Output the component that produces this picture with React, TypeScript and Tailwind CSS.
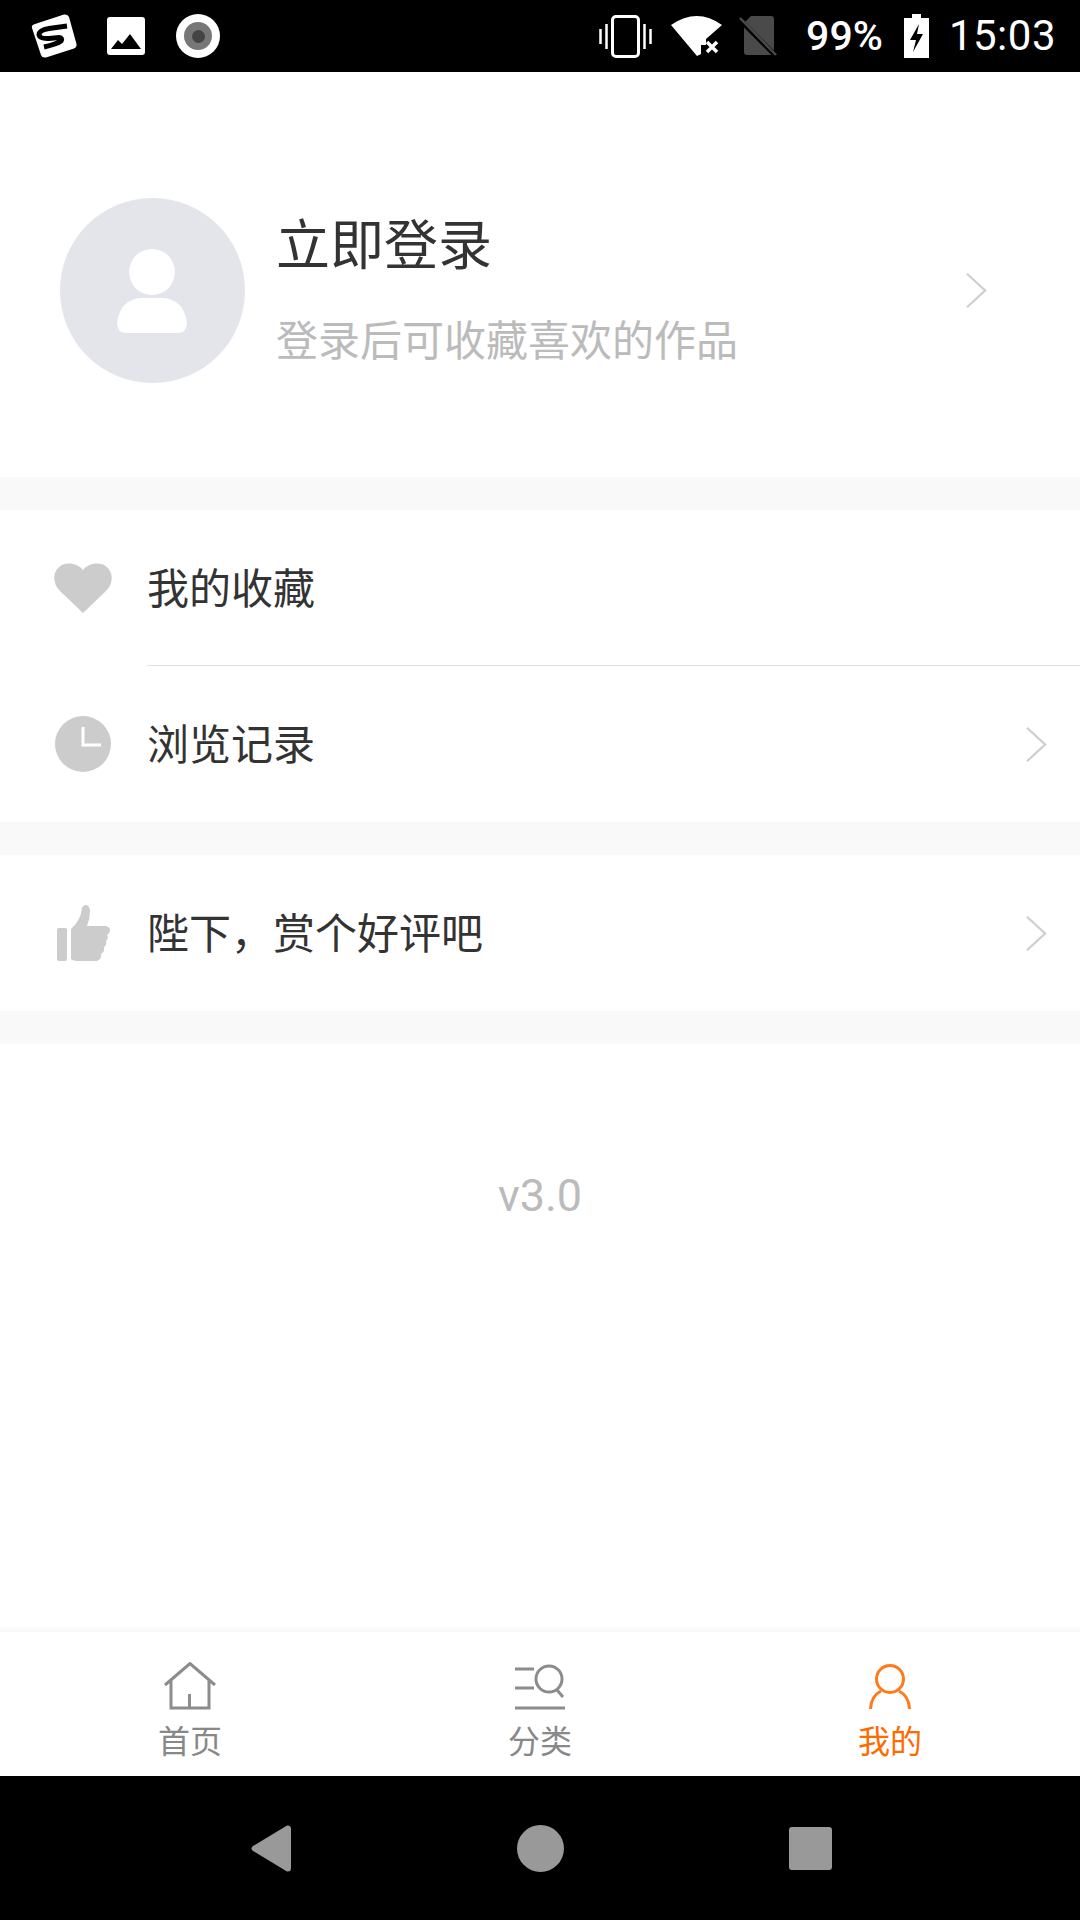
const cjk = "font-['Noto_Sans_CJK_SC','Noto_Sans',sans-serif]";

function Chevron({ className }: { className: string }) {
  return (
    <svg viewBox="0 0 24 38" className={className} fill="none" stroke="#cfcfcf" strokeWidth="2.4">
      <path d="M2 1.5 21 19 2 36.5" />
    </svg>
  );
}

function StatusBar() {
  return (
    <div className="flex h-[72px] items-center justify-between bg-black pl-[31px] pr-[24px] text-white">
      <div className="flex items-center">
        <svg viewBox="0 0 46 44" className="h-[44px] w-[46px]">
          <path d="M4 10 33 .5Q37 0 38 3L45.500 30Q46 33 43 34.500L15 43.500Q11 44 10 41L1 14Q0 11 4 10Z" fill="#fff" />
          <path d="M36 12 18 14.500Q8 16 8 21 9 25 18 24.500L28 23.500Q32 24 30 27 26 30 13 33" fill="none" stroke="#000" strokeWidth="5" />
        </svg>
        <svg viewBox="0 0 38 38" className="ml-[30px] h-[38px] w-[38px]">
          <rect width="38" height="38" rx="3" fill="#fff" />
          <path d="M4 32 11 23 15 27 23 17 34 32Z" fill="#000" />
        </svg>
        <div className="ml-[31px] flex size-[44px] items-center justify-center rounded-full bg-white">
          <div className="flex size-[28px] items-center justify-center rounded-full bg-[#777]">
            <div className="size-[13px] rounded-full bg-[#444]" />
          </div>
        </div>
      </div>
      <div className="flex items-center">
        <svg viewBox="0 0 53 43" className="h-[43px] w-[53px]" fill="none" stroke="#fff" strokeWidth="2.500">
          <rect x="13.500" y="1.500" width="26" height="40" rx="3.500" strokeWidth="3" />
          <path d="M1.500 14v15M7.500 9v25M45.500 9v25M51.500 14v15" />
        </svg>
        <svg viewBox="0 0 52 42" className="ml-[19px] h-[42px] w-[52px]">
          <path d="M0 10Q26-8 51 10L35 24V30H30V39L26 41Z" fill="#fff" />
          <path d="M36 27 46 37M46 27 36 37" stroke="#fff" strokeWidth="3.500" />
        </svg>
        <svg viewBox="0 0 40 42" className="ml-[16px] h-[42px] w-[40px]">
          <path d="M12 1H32Q35 1 35 4V37Q35 40 32 40H8Q5 40 5 37V8Z" fill="#4a4a4a" />
          <path d="M2 6 36 40" stroke="#000" strokeWidth="5" />
          <path d="M1 3 37 40" stroke="#4a4a4a" strokeWidth="2.500" />
        </svg>
        <span className="ml-[27px] font-['Roboto',sans-serif] text-[41px] leading-none font-medium">99%</span>
        <svg viewBox="0 0 25 44" className="ml-[21px] h-[44px] w-[25px]">
          <path d="M8 0H17V4H25V44H0V4H8Z" fill="#fff" />
          <path d="M15 10 6 26H12L9 38 19 20H13Z" fill="#000" />
        </svg>
        <span className="ml-[20px] font-['Roboto',sans-serif] text-[42px] leading-none tracking-[0.5px]">15:03</span>
      </div>
    </div>
  );
}

function ProfileHeader() {
  return (
    <div className="flex h-[405px] items-center bg-white pl-[60px] pr-[92px] pt-[32px]">
      <div className="flex size-[185px] items-center justify-center rounded-full bg-[#e4e5eb]">
        <svg viewBox="0 0 70 84" className="mr-[2px] h-[84px] w-[70px]" fill="#fff">
          <circle cx="35" cy="23" r="23" />
          <path d="M25 49H45Q67 50 70 74 70 84 60 84H10Q0 84 0 74 3 50 25 49Z" />
        </svg>
      </div>
      <div className={`ml-[31px] flex-1 pb-[10px] ${cjk}`}>
        <div className="text-[54px] leading-[76px] text-[#333]">立即登录</div>
        <div className="mt-[28px] text-[42px] leading-[60px] text-[#bbb]">登录后可收藏喜欢的作品</div>
      </div>
      <Chevron className="h-[37px] w-[23px]" />
    </div>
  );
}

function MenuRow({ icon, label, divider, arrow = true }: { icon: React.ReactNode; label: string; divider?: boolean; arrow?: boolean }) {
  return (
    <div className="flex h-[156px] items-stretch bg-white pl-[54px]">
      <div className="flex w-[58px] shrink-0 items-center justify-center">{icon}</div>
      <div className={`ml-[35px] flex flex-1 items-center justify-between pr-[32px] ${divider ? "border-b-[1px] border-[#e2e2e2]" : ""}`}>
        <span className={`${cjk} mb-[5px] text-[42px] text-[#333]`}>{label}</span>
        {arrow && <Chevron className="h-[37px] w-[23px]" />}
      </div>
    </div>
  );
}

function TabItem({ icon, label, active }: { icon: React.ReactNode; label: string; active?: boolean }) {
  return (
    <div className="flex flex-col items-center">
      <div className="flex h-[50px] items-end">{icon}</div>
      <span className={`${cjk} mt-[6px] text-[32px] leading-[46px] ${active ? "text-[#ff6a00]" : "text-[#888]"}`}>{label}</span>
    </div>
  );
}

export default function App() {
  return (
    <div className="flex h-[1920px] w-[1080px] flex-col overflow-hidden bg-white">
      <StatusBar />
      <ProfileHeader />
      <div className="h-[33px] bg-[#f9f9f9]" />
      <MenuRow
        divider
        arrow={false}
        label="我的收藏"
        icon={
          <svg viewBox="0 0 58 50" className="h-[50px] w-[58px]" fill="#cccccc">
            <path d="M29 50 6 28C-3 19-1 6 9 1.500 17-1 25 2 29 7 33 2 41-1 49 1.500 59 6 61 19 52 28Z" />
          </svg>
        }
      />
      <MenuRow
        label="浏览记录"
        icon={
          <svg viewBox="0 0 56 56" className="size-[56px]">
            <circle cx="28" cy="28" r="28" fill="#cccccc" />
            <path d="M28 11V29H46" fill="none" stroke="#fff" strokeWidth="3" />
          </svg>
        }
      />
      <div className="h-[33px] bg-[#f9f9f9]" />
      <MenuRow
        label="陛下，赏个好评吧"
        icon={
          <svg viewBox="0 0 53 56" className="h-[56px] w-[53px]" fill="#cccccc">
            <rect x="0" y="23" width="10" height="33" rx="2" />
            <path d="M14 54V24Q24 15 25 3 26 0 29 0 33 1 33 6 33 14 30 21H49Q53 22 53 25 53 28 50 30 52 33 49 36 50 40 47 42 48 47 44 49 45 54 40 56H22Q16 56 14 54Z" />
          </svg>
        }
      />
      <div className="h-[33px] bg-[#f9f9f9]" />
      <div className="flex-1 pt-[127px] text-center font-['Roboto',sans-serif] text-[45px] leading-[50px] text-[#bbb]">v3.0</div>
      <div className="h-[8px] bg-gradient-to-b from-white to-[#f8f8f8]" />
      <div className="grid h-[144px] grid-cols-3 items-start bg-white px-[15px] pt-[28px]">
        <TabItem
          label="首页"
          icon={
            <svg viewBox="0 0 52 48" className="h-[48px] w-[52px]" fill="none" stroke="#8c8c8c" strokeWidth="3">
              <path d="M1 23 26 1.500 51 23M7 18V46H45V18M25.500 46V32" />
            </svg>
          }
        />
        <TabItem
          label="分类"
          icon={
            <svg viewBox="0 0 52 46" className="h-[46px] w-[52px]" fill="none" stroke="#8c8c8c" strokeWidth="3">
              <path d="M1 5H20M1 24H20M1 44H51" />
              <circle cx="35" cy="15" r="13" />
              <path d="M43 26 49 33" />
            </svg>
          }
        />
        <TabItem
          active
          label="我的"
          icon={
            <svg viewBox="0 0 42 46" className="h-[46px] w-[42px]" fill="none" stroke="#ff7a1a" strokeWidth="3">
              <circle cx="21" cy="15" r="13.500" />
              <path d="M1.500 45C2 35 6 30 12 27M40.500 45C40 35 36 30 30 27" />
            </svg>
          }
        />
      </div>
      <div className="relative flex h-[144px] items-start bg-black pt-[49px]">
        <div className="grid w-full grid-cols-3 items-center">
          <svg viewBox="0 0 40 47" className="ml-[251px] h-[47px] w-[40px]" fill="#999">
            <path d="M36 .5Q40 0 40 4V43Q40 47 36 46.500L2 26Q-1 23.500 2 21Z" />
          </svg>
          <div className="mx-auto size-[47px] rounded-full bg-[#999]" />
          <div className="ml-[69px] size-[43px] rounded-[3px] bg-[#999]" />
        </div>
      </div>
    </div>
  );
}
